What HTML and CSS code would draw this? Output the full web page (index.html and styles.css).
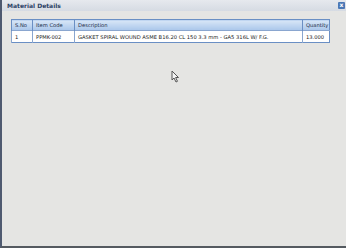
FILE: index.html
```html
<html>
<head>
	<title>Material Details</title>
	<link rel="stylesheet" href="styles.css">
</head>
<body>
	<div class="window">
		<div class="titlebar">
			<span class="title">Material Details</span>
			<span class="close">x</span>
		</div>
		<div class="content">
			<table class="grid">
				<tr>
					<th class="c-sno">S.No</th>
					<th class="c-code">Item Code</th>
					<th class="c-desc">Description</th>
					<th class="c-qty">Quantity</th>
				</tr>
				<tr>
					<td>1</td>
					<td>PPMK-002</td>
					<td>GASKET SPIRAL WOUND ASME B16.20 CL 150 3.3 mm - GA5 316L W/ F.G.</td>
					<td>13.000</td>
				</tr>
			</table>
		</div>
		<svg class="cursor" width="9" height="13" viewBox="0 0 9 13">
			<path d="M1 1 L1 10 L3 8 L5 12 L6.5 11.3 L4.6 7.5 L7.5 7.5 Z" fill="#f4f4f4" stroke="#555" stroke-width="1"/>
		</svg>
	</div>
</body>
</html>
```
FILE: styles.css
```css
body {
	margin: 0;
	font-family: "DejaVu Sans", sans-serif;
	background: #e4e4e2;
}

.window {
	position: relative;
	height: 248px;
	box-sizing: border-box;
	border-left: 2px solid #4f5a70;
	border-bottom: 2px solid #555a60;
	background: #e5e5e3;
}

.titlebar {
	height: 11px;
	display: flex;
	align-items: center;
	justify-content: space-between;
	padding: 0 1px 0 5px;
	background: linear-gradient(#e6e9ee, #d6dbe3);
}

.title {
	font-size: 6px;
	color: #2a4064;
	font-weight: 600;
}

.close {
	width: 7px;
	height: 7px;
	line-height: 6px;
	text-align: center;
	font-size: 6px;
	font-weight: bold;
	color: #ffffff;
	background: #4b78b6;
	border-radius: 1px;
}

.content {
	padding: 8px 16px 0 9px;
}

.grid {
	width: 319px;
	table-layout: fixed;
	border-collapse: collapse;
	border: 1px solid #6a8fc4;
	background: #ffffff;
	font-size: 5.2px;
	color: #222;
}

.grid th {
	height: 11px;
	text-align: left;
	font-weight: normal;
	padding: 0 3px;
	border-left: 1px solid #6a8fc4;
	background: linear-gradient(#d8e6f7, #a9c6ea);
	color: #1a2b44;
	white-space: nowrap;
}

.grid td {
	height: 12px;
	padding: 0 3px;
	border-left: 1px solid #8aa6cf;
	border-top: 1px solid #8aa6cf;
	white-space: nowrap;
}

.c-sno {
	width: 21px;
}

.c-code {
	width: 42px;
}

.c-qty {
	width: 27px;
}

.grid th.c-sno,
.grid th.c-code,
.grid th.c-qty {
	box-sizing: border-box;
}

.cursor {
	position: absolute;
	left: 169px;
	top: 70px;
}
```
